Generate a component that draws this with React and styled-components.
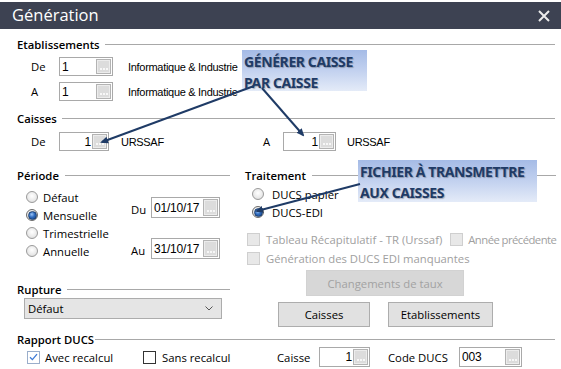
import React from "react";
import styled, { createGlobalStyle } from "styled-components";

const GlobalStyle = createGlobalStyle`
  html, body { margin: 0; padding: 0; background: #fff; }
  * { box-sizing: border-box; }
`;

const Window = styled.div`
  position: relative;
  width: 561px;
  height: 369px;
  overflow: hidden;
  background: #fff;
  font-family: "Open Sans", "Noto Sans", sans-serif;
  font-size: 11.3px;
  color: #000;
  padding-top: 2px;
`;

const TitleBar = styled.div`
  height: 27px;
  background: #3d4252;
  display: flex;
  align-items: center;
  justify-content: space-between;
  padding: 0 11px 0 12px;
  color: #fff;
`;

const Title = styled.div`
  font-size: 16.5px;
  line-height: 1;
  margin-top: -1px;
`;

const Main = styled.div`
  display: flex;
  flex-direction: column;
  padding: 0 6px 0 17px;
`;

const Header = styled.div`
  display: flex;
  align-items: center;
  height: 16px;
  margin-top: ${(p) => p.$mt || 0}px;
`;

const HeaderLabel = styled.span`
  font-weight: 600;
  white-space: nowrap;
`;

const HeaderRule = styled.div`
  flex: 1;
  height: 1px;
  background: #a8a8a8;
  margin-left: ${(p) => (p.$gap ?? 5)}px;
`;

const Rows = styled.div`
  display: flex;
  flex-direction: column;
  gap: ${(p) => p.$gap || 0}px;
  margin-top: ${(p) => p.$mt || 0}px;
`;

const FieldRow = styled.div`
  display: flex;
  align-items: center;
  height: ${(p) => p.$h || 19}px;
  margin-top: ${(p) => p.$mt || 0}px;
  padding-left: ${(p) => p.$pl || 0}px;
`;

const Half = styled.div`
  display: flex;
  align-items: center;
  width: ${(p) => p.$w}px;
`;

const FieldLabel = styled.span`
  display: inline-flex;
  align-items: center;
  flex: none;
  width: ${(p) => p.$w}px;
  margin-left: ${(p) => p.$ml || 0}px;
  padding-top: ${(p) => p.$pt || 0}px;
  white-space: nowrap;
`;

const InputBox = styled.div`
  display: flex;
  align-items: center;
  flex: none;
  width: ${(p) => p.$w}px;
  height: ${(p) => p.$h || 19}px;
  border: 1px solid #a9a9a9;
  background: #fff;
  padding: 1px 1px 1px 2px;
`;

const InputValue = styled.span`
  flex: 1;
  font-family: "Liberation Sans", Arial, sans-serif;
  font-size: 12px;
  letter-spacing: -0.2px;
  text-align: ${(p) => p.$align || "left"};
  padding-right: 1px;
  white-space: nowrap;
  overflow: hidden;
`;

const DotsButton = styled.span`
  flex: none;
  align-self: stretch;
  width: 15px;
  background: #dcdcdc;
  border: 1px solid #b3b3b3;
  box-shadow: inset 0 0 0 1px #ececec;
  display: flex;
  align-items: flex-end;
  justify-content: center;
  padding-bottom: 3px;
  gap: 1px;
`;

const Dot = styled.i`
  width: 2px;
  height: 2px;
  background: #f7f7f7;
`;

const Lookup = ({ w, h, value, align }) => (
  <InputBox $w={w} $h={h}>
    <InputValue $align={align}>{value}</InputValue>
    <DotsButton>
      <Dot />
      <Dot />
      <Dot />
    </DotsButton>
  </InputBox>
);

const Desc = styled.span`
  font-family: "Liberation Sans", Arial, sans-serif;
  font-size: 11px;
  letter-spacing: -0.3px;
  margin-left: ${(p) => p.$ml || 0}px;
  white-space: nowrap;
`;

const Columns = styled.div`
  display: grid;
  grid-template-columns: 213px 1fr;
  column-gap: 15px;
  margin-top: 16px;
`;

const Column = styled.div`
  display: flex;
  flex-direction: column;
`;

const LeftBody = styled.div`
  display: flex;
  margin-top: 5px;
`;

const RadioList = styled.div`
  display: flex;
  flex-direction: column;
  width: ${(p) => p.$w || "auto"};
  margin-left: ${(p) => p.$ml || 0}px;
  margin-top: ${(p) => p.$mt || 0}px;
`;

const RadioItem = styled.label`
  display: flex;
  align-items: center;
  height: 18px;
  gap: ${(p) => p.$gap || 5}px;
  white-space: nowrap;
`;

const RadioCircle = styled.span`
  flex: none;
  width: 12px;
  height: 12px;
  border-radius: 50%;
  border: 1px solid ${(p) => (p.$on ? "#6a6a6a" : "#9a9a9a")};
  background: radial-gradient(circle at 50% 40%, #ffffff 0%, #e9e9e9 60%, #cfcfcf 100%);
  display: flex;
  align-items: center;
  justify-content: center;
  &::after {
    content: "";
    display: ${(p) => (p.$on ? "block" : "none")};
    width: 7px;
    height: 7px;
    border-radius: 50%;
    background: radial-gradient(circle at 40% 35%, #9cc4f5 0%, #2f6cc0 45%, #153f80 100%);
    border: 1px solid #1d3f70;
  }
`;

const Radio = ({ on, gap, children }) => (
  <RadioItem $gap={gap}>
    <RadioCircle $on={on} />
    {children}
  </RadioItem>
);

const DateGrid = styled.div`
  display: grid;
  grid-template-columns: 20px 69px;
  grid-auto-rows: 21px;
  row-gap: 20px;
  align-items: center;
  margin-top: 9px;
`;

const CheckRow = styled.div`
  display: flex;
  align-items: center;
  height: 19px;
  padding-left: ${(p) => p.$pl || 0}px;
`;

const CheckItem = styled.label`
  display: flex;
  align-items: center;
  gap: ${(p) => p.$gap || 6}px;
  width: ${(p) => (p.$w ? p.$w + "px" : "auto")};
  margin-left: ${(p) => p.$ml || 0}px;
  color: ${(p) => (p.$disabled ? "#a0a0a0" : "#000")};
  letter-spacing: ${(p) => p.$ls || 0}px;
  white-space: nowrap;
  flex: none;
`;

const Box = styled.span`
  flex: none;
  width: 13px;
  height: 13px;
  border: 1px solid ${(p) => (p.$disabled ? "#cfcfcf" : p.$checked ? "#9aaecb" : "#333")};
  background: ${(p) => (p.$disabled ? "#e8e8e8" : "#fff")};
  display: flex;
  align-items: center;
  justify-content: center;
`;

const Check = ({ disabled, checked, w, ml, gap, ls, children }) => (
  <CheckItem $disabled={disabled} $w={w} $ml={ml} $gap={gap} $ls={ls}>
    <Box $disabled={disabled} $checked={checked}>
      {checked && (
        <svg width="9" height="8" viewBox="0 0 9 8">
          <path d="M1 4.2 L3.4 6.6 L8 1.2" fill="none" stroke="#3d7ad6" strokeWidth="1.3" />
        </svg>
      )}
    </Box>
    {children}
  </CheckItem>
);

const Button = styled.div`
  display: flex;
  align-items: center;
  justify-content: center;
  width: ${(p) => p.$w}px;
  height: ${(p) => p.$h || 25}px;
  margin-left: ${(p) => p.$ml || 0}px;
  margin-top: ${(p) => p.$mt || 0}px;
  background: ${(p) => (p.$disabled ? "#d7d7d7" : "#e1e1e1")};
  border: 1px solid ${(p) => (p.$disabled ? "#d2d2d2" : "#adadad")};
  color: ${(p) => (p.$disabled ? "#a2a2a2" : "#000")};
  flex: none;
`;

const ButtonRow = styled.div`
  display: flex;
  gap: 18px;
  margin-left: 33px;
  margin-top: 6px;
`;

const Select = styled.div`
  display: flex;
  align-items: center;
  justify-content: space-between;
  width: 198px;
  height: 21px;
  margin-left: 7px;
  margin-top: 1px;
  padding: 0 8px 0 3px;
  background: #e5e5e5;
  border: 1px solid #acacac;
`;

const Callout = styled.div`
  position: absolute;
  left: ${(p) => p.$x}px;
  top: ${(p) => p.$y}px;
  width: ${(p) => p.$w}px;
  height: ${(p) => p.$h}px;
  padding: 1px 0 0 2px;
  background: linear-gradient(180deg, #a5bbe6 0%, #c2d1ef 50%, #e4ebf8 100%);
  font-family: "Noto Sans", "Open Sans", sans-serif;
  font-weight: 700;
  font-size: 14px;
  line-height: 21px;
  letter-spacing: -0.4px;
  color: #1f3b66;
  text-shadow: 1px 1px 1px rgba(0, 0, 0, 0.25);
  white-space: nowrap;
`;

const Overlay = styled.svg`
  position: absolute;
  left: 0;
  top: 0;
  pointer-events: none;
`;

export default function App() {
  return (
    <>
      <GlobalStyle />
      <Window>
        <TitleBar>
          <Title>Génération</Title>
          <svg width="12" height="12" viewBox="0 0 12 12">
            <path d="M1 1 L11 11 M11 1 L1 11" stroke="#ececec" strokeWidth="2" />
          </svg>
        </TitleBar>
        <Main>
          <Header $mt={7}>
            <HeaderLabel>Etablissements</HeaderLabel>
            <HeaderRule $gap={5} />
          </Header>
          <Rows $mt={5} $gap={6}>
            <FieldRow>
              <FieldLabel $w={28} $ml={14}>De</FieldLabel>
              <Lookup w={54} value="1" />
              <Desc $ml={15}>Informatique &amp; Industrie</Desc>
            </FieldRow>
            <FieldRow>
              <FieldLabel $w={28} $ml={14}>A</FieldLabel>
              <Lookup w={54} value="1" />
              <Desc $ml={15}>Informatique &amp; Industrie</Desc>
            </FieldRow>
          </Rows>

          <Header $mt={9}>
            <HeaderLabel>Caisses</HeaderLabel>
            <HeaderRule $gap={5} />
          </Header>
          <FieldRow $mt={6}>
            <Half $w={246}>
              <FieldLabel $w={28} $ml={14}>De</FieldLabel>
              <Lookup w={50} value="1" align="right" />
              <Desc $ml={12}>URSSAF</Desc>
            </Half>
            <FieldLabel $w={20}>A</FieldLabel>
            <Lookup w={53} value="1" align="right" />
            <Desc $ml={11}>URSSAF</Desc>
          </FieldRow>

          <Columns>
            <Column>
              <Header>
                <HeaderLabel>Période</HeaderLabel>
                <HeaderRule $gap={6} />
              </Header>
              <LeftBody>
                <RadioList $w="105px" $ml={9}>
                  <Radio>Défaut</Radio>
                  <Radio on>Mensuelle</Radio>
                  <Radio>Trimestrielle</Radio>
                  <Radio>Annuelle</Radio>
                </RadioList>
                <DateGrid>
                  <FieldLabel $w={20} $pt={4}>Du</FieldLabel>
                  <Lookup w={69} h={21} value="01/10/17" />
                  <FieldLabel $w={20} $pt={4}>Au</FieldLabel>
                  <Lookup w={69} h={21} value="31/10/17" />
                </DateGrid>
              </LeftBody>
              <Header $mt={21}>
                <HeaderLabel>Rupture</HeaderLabel>
                <HeaderRule $gap={6} />
              </Header>
              <Select>
                <span>Défaut</span>
                <svg width="8" height="5" viewBox="0 0 8 5">
                  <path d="M0.5 0.5 L4 4 L7.5 0.5" fill="none" stroke="#555" strokeWidth="1" />
                </svg>
              </Select>
            </Column>

            <Column>
              <Header>
                <HeaderLabel>Traitement</HeaderLabel>
                <HeaderRule $gap={6} />
              </Header>
              <RadioList $ml={7} $mt={2}>
                <Radio gap={8}>DUCS papier</Radio>
                <Radio gap={8} on>DUCS-EDI</Radio>
              </RadioList>
              <Rows $mt={9}>
                <CheckRow $pl={2}>
                  <Check disabled>Tableau Récapitulatif - TR (Urssaf)</Check>
                  <Check disabled ml={8} gap={5} ls={-0.55}>Année précédente</Check>
                </CheckRow>
                <CheckRow $pl={2}>
                  <Check disabled>Génération des DUCS EDI manquantes</Check>
                </CheckRow>
              </Rows>
              <Button $disabled $w={158} $h={26} $ml={61} $mt={2}>
                Changements de taux
              </Button>
              <ButtonRow>
                <Button $w={92}>Caisses</Button>
                <Button $w={105}>Etablissements</Button>
              </ButtonRow>
            </Column>
          </Columns>

          <Header $mt={4}>
            <HeaderLabel>Rapport DUCS</HeaderLabel>
            <HeaderRule $gap={1} />
          </Header>
          <FieldRow $h={20} $pl={10}>
            <Check checked w={116} gap={5}>Avec recalcul</Check>
            <Check w={134} gap={6}>Sans recalcul</Check>
            <FieldLabel $w={42}>Caisse</FieldLabel>
            <Lookup w={51} h={20} value="1" align="right" />
            <FieldLabel $w={71} $ml={18}>Code DUCS</FieldLabel>
            <Lookup w={63} h={20} value="003" />
          </FieldRow>
        </Main>

        <Callout $x={242} $y={50} $w={125} $h={41}>
          GÉNÉRER CAISSE
          <br />
          PAR CAISSE
        </Callout>
        <Callout $x={358} $y={160} $w={179} $h={42}>
          FICHIER À TRANSMETTRE
          <br />
          AUX CAISSES
        </Callout>

        <Overlay width="561" height="369" viewBox="0 0 561 369">
          <defs>
            <marker id="ah" markerWidth="8" markerHeight="8" refX="6" refY="4" orient="auto" markerUnits="userSpaceOnUse">
              <path d="M0 0.5 L8 4 L0 7.5 Z" fill="#1f3b66" />
            </marker>
          </defs>
          <g stroke="#1f3b66" strokeWidth="2" fill="none">
            <line x1="254" y1="86" x2="102" y2="142" markerEnd="url(#ah)" />
            <line x1="262" y1="88" x2="303" y2="135" markerEnd="url(#ah)" />
            <line x1="360" y1="184" x2="257" y2="211" markerEnd="url(#ah)" />
          </g>
        </Overlay>
      </Window>
    </>
  );
}
